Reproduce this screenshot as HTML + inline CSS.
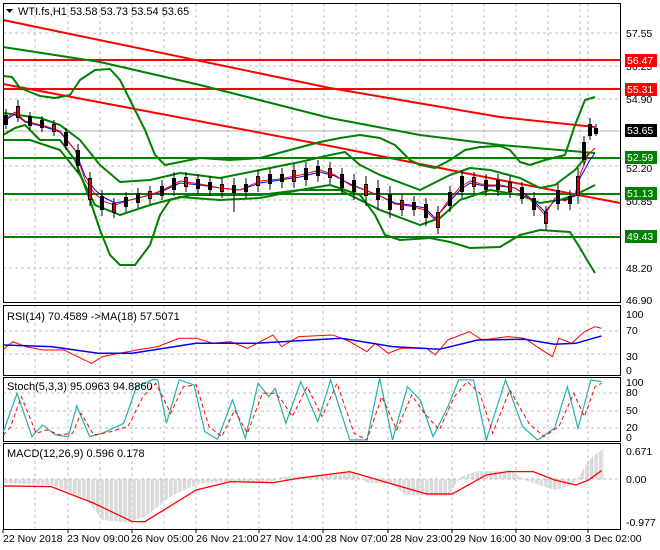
<!DOCTYPE html>
<html><head><meta charset="utf-8"><style>
html,body{margin:0;padding:0;background:#fff;}
svg{display:block;font-family:"Liberation Sans",sans-serif;}
</style></head><body>
<svg width="660" height="550" viewBox="0 0 660 550" xmlns="http://www.w3.org/2000/svg">
<defs>
<pattern id="hs" width="3" height="10" patternUnits="userSpaceOnUse"><rect x="0" y="0" width="1" height="10" fill="#a8a8a8"/></pattern>
</defs>
<rect width="660" height="550" fill="#fff"/>
<g stroke="#c0c0c0" stroke-dasharray="3,3" stroke-width="1" fill="none">
<path d="M35 3V303M68 3V303M100 3V303M132 3V303M164 3V303M196 3V303M228 3V303M260 3V303M292 3V303M324 3V303M356 3V303M388 3V303M420 3V303M452 3V303M484 3V303M516 3V303M548 3V303M580 3V303M588 3V303"/>
<path d="M68 305V529M132 305V529M196 305V529M259 305V529M323 305V529M388 305V529M452 305V529M516 305V529M588 305V529M35 305V529M100 305V529M164 305V529M228 305V529M292 305V529M356 305V529M420 305V529M484 305V529M548 305V529"/>
<path d="M3 33H620M3 66H620M3 99H620M3 166H620M3 200H620M3 234H620M3 268H620"/>
<path d="M3 331H620M3 354H620M3 393H620M3 411H620M3 428H620M3 479H620"/>
</g>
<path d="M3 131H620" stroke="#b0b0b0"/>
<g fill="none" stroke-linejoin="round">
<path d="M3 60H620M3 89H620" stroke="#f00" stroke-width="2"/>
<path d="M3 20L330 88L500 117L595 127" stroke="#f00" stroke-width="2"/>
<path d="M3 84L330 146L500 180L620 203" stroke="#f00" stroke-width="2"/>
<path d="M3 158H620M3 194H620M3 237H620" stroke="#008000" stroke-width="2"/>
<path d="M3 47L100 62L200 85L330 118L420 135L500 145L595 153" stroke="#008000" stroke-width="2"/>
<path d="M3 76L12 77L20 88L40 96L55 98L70 95L80 80L95 70L110 69L120 80L130 100L145 130L155 155L165 165L180 162L200 158L230 160L260 158L290 150L320 142L340 138L360 135L380 138L395 145L410 160L420 165L435 168L450 160L465 150L480 147L500 146L510 150L520 162L530 165L545 160L565 155L575 125L585 100L595 97" stroke="#008000" stroke-width="2"/>
<path d="M3 135L15 128L25 125L40 140L60 140L75 160L90 200L100 230L110 255L120 265L135 265L150 245L160 215L170 200L190 195L220 195L260 195L300 190L330 185L360 195L375 215L385 235L400 240L430 238L450 242L470 248L500 247L520 235L540 230L570 232L580 248L590 265L595 273" stroke="#008000" stroke-width="2"/>
<path d="M3 113L40 118L60 125L80 140L100 165L120 182L150 180L180 173L220 178L260 170L300 162L330 155L345 152L360 165L380 175L420 190L450 175L470 168L490 170L520 178L540 188L555 185L575 170L590 152" stroke="#008000" stroke-width="2"/>
<path d="M3 140L30 140L60 150L80 175L95 205L120 215L150 205L180 197L220 200L260 198L300 190L340 190L380 210L420 225L440 218L460 200L490 190L520 195L540 203L560 200L575 195L595 185" stroke="#008000" stroke-width="2"/>
<path d="M3 122L15 114L25 122L45 127L60 132L75 150L85 176L95 190L105 198L115 203L130 200L150 195L165 190L180 183L200 185L220 188L240 190L260 183L280 180L300 177L320 172L335 176L350 184L365 190L380 196L395 203L410 205L425 208L435 218L445 207L460 190L470 183L485 186L500 186L515 188L525 194L535 202L545 212L555 200L565 200L575 196L580 178L590 160L595 153" stroke="#00f" stroke-width="1"/>
<path d="M3 121L15 112L25 121L45 126L60 131L75 150L85 180L95 194L105 202L115 205L130 200L150 195L165 189L180 181L200 184L220 188L240 190L260 181L280 179L300 175L320 170L335 175L350 185L365 190L380 196L395 204L410 206L425 210L435 220L445 205L460 187L470 181L485 185L500 185L515 188L525 195L535 204L545 215L555 198L565 201L575 195L580 175L588 155L595 148" stroke="#f00" stroke-width="1"/>
<path d="M6 109V129M18 100V122M30 112V130M42 116V132M54 120V136M66 128V150M78 144V172M90 172V206M102 190V216M114 198V218M126 192V212M138 188V208M150 186V204M162 180V200M174 172V196M186 172V192M198 174V194M210 176V196M222 178V198M234 178V212M246 178V198M258 170V192M270 168V190M282 168V188M294 164V188M306 162V186M318 160V182M330 162V184M342 168V194M354 174V200M366 176V206M378 180V210M390 186V218M402 194V216M414 196V216M426 198V226M438 206V234M450 186V212M462 170V198M474 172V194M486 174V196M498 174V196M510 176V198M522 182V204M534 192V216M546 206V230M558 184V210M570 190V210M578 168V204M584 136V166M590 118V140M596 124V136" stroke="#000"/>
<path d="M6 115V125M18 106V118M30 116V126M42 120V128M54 124V132M66 132V146M78 150V166M90 178V200M102 196V210M114 203V213M126 197V207M138 193V203M150 191V199M162 186V196M174 178V190M186 177V187M198 179V189M210 182V190M222 184V192M234 185V193M246 184V192M258 176V186M270 174V184M282 174V182M294 170V182M306 168V180M318 166V176M330 168V178M342 174V188M354 180V192M366 184V196M378 188V200M390 194V210M402 200V210M414 202V210M426 204V218M438 212V228M450 192V206M462 176V192M474 177V187M486 180V190M498 180V190M510 182V192M522 187V199M534 198V210M546 212V224M558 190V204M570 196V204M578 176V196M584 142V160M590 124V136M596 128V134" stroke="#000" stroke-width="4"/>
<path d="M18 107V117M54 125V131M90 179V199M114 204V212M150 192V198M186 178V186M222 185V191M258 177V185M294 171V181M330 169V177M366 185V195M402 201V209M438 213V227M474 178V186M510 183V191M546 213V223M578 177V195" stroke="#e00000" stroke-width="2"/>
</g>
<g fill="none" stroke="#000" stroke-width="1">
<rect x="3.5" y="3.5" width="617" height="299"/>
<rect x="3.5" y="305.5" width="617" height="70"/>
<rect x="3.5" y="377.5" width="617" height="64"/>
<rect x="3.5" y="443.5" width="617" height="86"/>
</g>
<g transform="scale(0.4266,0.3333) translate(0,900)" fill="none">
<path d="M8 148L30 125L60 140L100 150L150 150L190 175L215 190L240 170L280 160L320 150L370 140L420 115L460 115L500 130L540 125L580 145L640 105L660 140L700 110L780 105L820 125L860 155L880 130L910 160L940 145L1000 145L1020 165L1050 120L1100 95L1130 120L1190 110L1230 115L1270 150L1295 170L1310 115L1340 130L1370 95L1395 80L1410 85" stroke="#f00" vector-effect="non-scaling-stroke"/>
<path d="M8 135L120 140L230 160L310 160L460 130L600 130L800 115L920 140L1030 148L1120 120L1230 118L1300 133L1350 130L1410 108" stroke="#00f" stroke-width="1.5" vector-effect="non-scaling-stroke"/>
<path d="M8 395L40 280L75 410L100 375L130 405L160 410L180 318L210 410L240 400L290 370L320 260L360 238L370 240L390 370L420 240L455 255L480 395L510 418L545 300L575 415L605 250L630 290L645 265L670 370L705 245L745 365L775 240L820 420L860 420L890 235L920 420L955 260L985 300L1015 410L1050 320L1075 240L1110 240L1140 420L1185 240L1225 380L1260 420L1300 385L1330 260L1355 385L1385 240L1410 245" stroke="#20b2aa" stroke-width="1.2" vector-effect="non-scaling-stroke"/>
<path d="M8 405L25 380L50 290L85 400L110 390L140 405L170 400L190 340L220 405L260 395L300 380L335 290L365 250L385 300L400 340L430 260L460 255L490 380L520 410L550 330L580 400L615 280L645 280L660 300L685 350L720 260L755 350L790 250L830 400L860 420L895 290L930 390L965 285L995 340L1030 390L1065 290L1095 245L1125 280L1155 400L1195 270L1240 370L1275 410L1310 380L1345 280L1370 350L1395 260L1410 250" stroke="#f00" stroke-dasharray="4,3" vector-effect="non-scaling-stroke"/>
<path d="M8 538L8 550L120 555L150 570L200 595L240 660L300 668L340 650L400 590L440 565L480 548L640 545L660 530L780 525L820 513L840 530L860 548L920 552L950 585L1050 588L1080 530L1120 513L1200 515L1230 540L1300 570L1330 560L1350 545L1380 480L1415 445L1415 538Z" fill="url(#hs)" stroke="none"/>
<path d="M8 558L120 560L220 610L310 665L340 665L460 570L540 545L640 548L700 535L820 515L900 545L1000 582L1060 582L1140 525L1190 515L1250 515L1300 540L1350 555L1380 540L1410 512" stroke="#f00" stroke-width="1.3" vector-effect="non-scaling-stroke"/>
</g>
<g font-size="11" fill="#000">
<path d="M6 9h7l-3.5 4z" fill="#000"/>
<text x="18" y="15">WTI.fs,H1  53.58 53.73 53.54 53.65</text>
<text x="7" y="320">RSI(14) 70.4589  -&gt;MA(18) 57.5071</text>
<text x="7" y="390">Stoch(5,3,3) 95.0963 94.8860</text>
<text x="7" y="457">MACD(12,26,9) 0.596 0.178</text>
<g font-size="10.5">
<text x="626" y="37">57.55</text><text x="626" y="70">56.25</text><text x="626" y="103">54.90</text>
<text x="626" y="172">52.20</text><text x="626" y="205">50.85</text><text x="626" y="272">48.20</text><text x="626" y="304">46.90</text>
<text x="626" y="318">100</text><text x="626" y="334">70</text><text x="626" y="360">30</text><text x="626" y="374">0</text>
<text x="626" y="386">100</text><text x="626" y="396">80</text><text x="626" y="414">50</text><text x="626" y="431">20</text><text x="626" y="441">0</text>
<text x="626" y="455">0.671</text><text x="626" y="483">0.00</text><text x="626" y="526">-0.977</text>
</g>
<rect x="625" y="54" width="32" height="13" fill="#f00"/><text x="627" y="64" fill="#fff" font-size="10.5">56.47</text>
<rect x="625" y="83" width="32" height="13" fill="#f00"/><text x="627" y="93" fill="#fff" font-size="10.5">55.31</text>
<rect x="625" y="124" width="32" height="13" fill="#000"/><text x="627" y="134" fill="#fff" font-size="10.5">53.65</text>
<rect x="625" y="151" width="32" height="13" fill="#008000"/><text x="627" y="161" fill="#fff" font-size="10.5">52.59</text>
<rect x="625" y="187" width="32" height="13" fill="#008000"/><text x="627" y="197" fill="#fff" font-size="10.5">51.13</text>
<rect x="625" y="230" width="32" height="13" fill="#008000"/><text x="627" y="240" fill="#fff" font-size="10.5">49.43</text>
<g font-size="10.5">
<text x="3" y="542">22 Nov 2018</text><text x="67" y="542">23 Nov 09:00</text><text x="131" y="542">26 Nov 05:00</text>
<text x="196" y="542">26 Nov 21:00</text><text x="260" y="542">27 Nov 14:00</text><text x="325" y="542">28 Nov 07:00</text>
<text x="390" y="542">28 Nov 23:00</text><text x="454" y="542">29 Nov 16:00</text><text x="519" y="542">30 Nov 09:00</text>
<text x="585" y="542">3 Dec 02:00</text>
</g>
</g>
<path d="M3 529V533M68 529V533M132 529V533M196 529V533M259 529V533M323 529V533M388 529V533M452 529V533M516 529V533M588 529V533" stroke="#000"/>
</svg>
</body></html>
